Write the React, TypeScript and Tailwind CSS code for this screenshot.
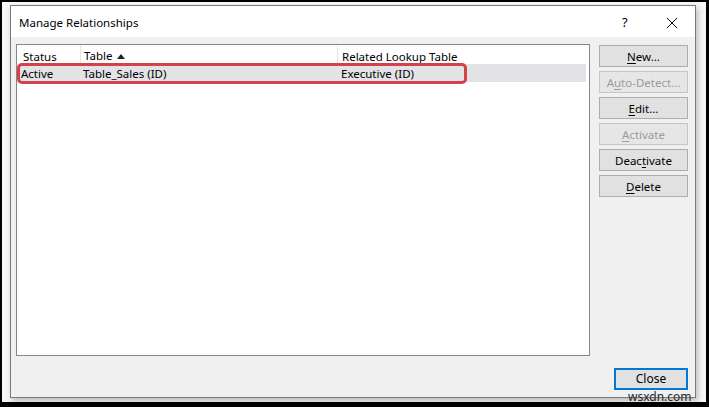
import React from 'react';

const font = { fontFamily: '"Noto Sans", "Open Sans", Arial, sans-serif' };

interface DlgButtonProps {
    label: string;
    accessKey: number;
    disabled?: boolean;
}

// Classic dialog push button; the access-key letter is underlined
const DlgButton: React.FC<DlgButtonProps> = ({ label, accessKey, disabled }) => (
    <div
        className={`h-[22px] w-[89px] flex items-center justify-center pt-[1px] text-[11.5px] border ${
            disabled ? 'bg-[#e6e6e6] border-[#c6c6c6] text-[#9c9c9c]' : 'bg-[#e1e1e1] border-[#adadad] text-black'
        }`}
    >
        <span>
            {label.slice(0, accessKey)}
            <span className="underline underline-offset-2">{label[accessKey]}</span>
            {label.slice(accessKey + 1)}
        </span>
    </div>
);

export default function App() {
    return (
        <div className="w-[709px] h-[407px] bg-black pt-[2px] pl-[2px] pr-[3px] pb-[5px]" style={font}>
            <div className="w-full h-full bg-[#f7f7f7] pl-[8px] pt-[3px] pr-[10px] relative">
                <div className="w-[686px] h-[393px] border border-[#7a7a7a] flex flex-col shadow-[2px_3px_6px_rgba(0,0,0,0.25)]">
                    {/* title bar */}
                    <div className="h-[31px] bg-white flex items-center pt-[2px] pl-[8px] text-[11.5px] text-black">
                        <span className="flex-1">Manage Relationships</span>
                        <span className="w-[20px] text-[13px] mr-[24px]">?</span>
                        <svg width="12" height="12" viewBox="0 0 12 12" className="mr-[17px]">
                            <path d="M1 1L11 11M11 1L1 11" stroke="#111" strokeWidth="1" />
                        </svg>
                    </div>

                    {/* body */}
                    <div className="flex-1 bg-[#f0f0f0] flex flex-col pt-[7px] pl-[5px] pr-[7px] pb-[7px]">
                        <div className="flex gap-[9px]">
                            <div className="w-[574px] h-[312px] bg-white border border-[#828790] relative text-[11.5px] text-black">
                                <div className="flex h-[19px]">
                                    <div className="w-[64px] h-full pl-[6px] pt-[3px] border-r border-[#e5e5e5]">Status</div>
                                    <div className="w-[257px] h-full pl-[3px] pt-[3px] flex items-center gap-[5px] border-r border-[#e5e5e5]">
                                        Table
                                        <svg width="8" height="5" viewBox="0 0 8 5">
                                            <path d="M0 5L4 0L8 5Z" fill="#222" />
                                        </svg>
                                    </div>
                                    <div className="flex-1 h-full pl-[4px] pt-[3px]">Related Lookup Table</div>
                                </div>
                                <div className="flex h-[18px] items-center pt-[1px] bg-[#e3e3e6] mr-[3px]">
                                    <div className="w-[64px] pl-[4px]">Active</div>
                                    <div className="w-[257px] pl-[2px]">Table_Sales (ID)</div>
                                    <div className="flex-1 pl-[3px]">Executive (ID)</div>
                                </div>
                                {/* highlight drawn over the selected row */}
                                <div className="absolute left-0 top-[18px] w-[450px] h-[21px] border-[3px] border-[#d6404a] rounded-[5px]" />
                            </div>
                            <div className="flex flex-col gap-[4px] mt-[1px]">
                                <DlgButton label="New..." accessKey={0} />
                                <DlgButton label="Auto-Detect..." accessKey={1} disabled />
                                <DlgButton label="Edit..." accessKey={0} />
                                <DlgButton label="Activate" accessKey={0} disabled />
                                <DlgButton label="Deactivate" accessKey={4} />
                                <DlgButton label="Delete" accessKey={0} />
                            </div>
                        </div>
                        <div className="flex justify-end mt-[12px]">
                            <div className="w-[74px] h-[22px] flex items-center justify-center bg-[#e1e1e1] border-2 border-[#0078d7] text-[12px] text-black">
                                Close
                            </div>
                        </div>
                    </div>
                </div>
                <span className="absolute left-[626px] top-[389px] text-[12px] leading-none text-[#2a2a2a]">wsxdn.com</span>
            </div>
        </div>
    );
}
